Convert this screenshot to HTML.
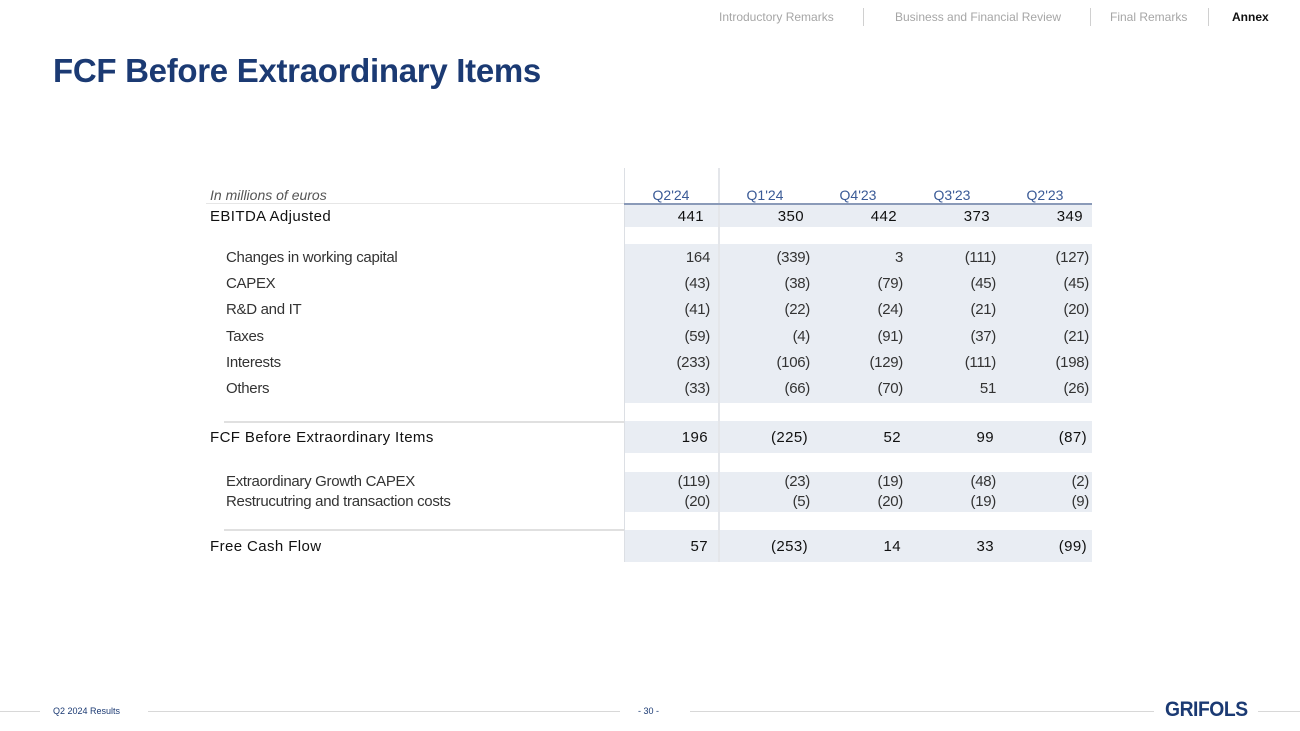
<!DOCTYPE html><html><head><style>
body{margin:0;width:1300px;height:731px;position:relative;background:#fff;font-family:"Liberation Sans",sans-serif;overflow:hidden}
.a{position:absolute}
.nav{top:10px;font-size:12px;color:#a6a6a6}
.sep{width:1px;height:18px;background:#d0d0d0;top:8px}
.sh{background:#e9edf3}
.t{font-size:15px;color:#333;line-height:18px}
.v{width:90px;text-align:right}
.h{font-size:14px;color:#3a5a96;width:90px;text-align:center;top:187px}
</style></head><body>
<div class="a nav" style="left:719px">Introductory Remarks</div>
<div class="a sep" style="left:863px"></div>
<div class="a nav" style="left:895px">Business and Financial Review</div>
<div class="a sep" style="left:1090px"></div>
<div class="a nav" style="left:1110px">Final Remarks</div>
<div class="a sep" style="left:1208px"></div>
<div class="a nav" style="left:1232px;color:#111;font-weight:bold">Annex</div>
<div class="a" style="left:53px;top:52px;font-size:33px;font-weight:bold;color:#1b3a73;letter-spacing:-0.3px">FCF Before Extraordinary Items</div>

<div class="a sh" style="left:624px;top:204px;width:468px;height:23px"></div>
<div class="a sh" style="left:624px;top:244px;width:468px;height:159px"></div>
<div class="a sh" style="left:624px;top:421px;width:468px;height:32px"></div>
<div class="a sh" style="left:624px;top:472px;width:468px;height:40px"></div>
<div class="a sh" style="left:624px;top:530px;width:468px;height:32px"></div>
<div class="a" style="left:624px;top:168px;width:1px;height:394px;background:#dcdfe4"></div>
<div class="a" style="left:718px;top:168px;width:2px;height:394px;background:#e4e6ea"></div>
<div class="a" style="left:206px;top:203px;width:420px;height:1px;background:#e6e6e6"></div>
<div class="a" style="left:624px;top:203px;width:468px;height:2px;background:#8a9ab8"></div>
<div class="a" style="left:224px;top:421px;width:400px;height:2px;background:#e0e0e0"></div>
<div class="a" style="left:224px;top:529px;width:400px;height:2px;background:#e0e0e0"></div>

<div class="a t" style="left:210px;top:186px;font-style:italic;font-size:14px;color:#555">In millions of euros</div>
<div class="a h" style="left:626px">Q2'24</div><div class="a h" style="left:720px">Q1'24</div><div class="a h" style="left:813px">Q4'23</div><div class="a h" style="left:907px">Q3'23</div><div class="a h" style="left:1000px">Q2'23</div>

<div id="rows"></div>
<script>
var R=[[208,"EBITDA Adjusted",1,["441","350","442","373","349"]],
[249,"Changes in working capital",0,["164","(339)","3","(111)","(127)"]],
[275,"CAPEX",0,["(43)","(38)","(79)","(45)","(45)"]],
[301,"R&D and IT",0,["(41)","(22)","(24)","(21)","(20)"]],
[328,"Taxes",0,["(59)","(4)","(91)","(37)","(21)"]],
[354,"Interests",0,["(233)","(106)","(129)","(111)","(198)"]],
[380,"Others",0,["(33)","(66)","(70)","51","(26)"]],
[429,"FCF Before Extraordinary Items",1,["196","(225)","52","99","(87)"]],
[473,"Extraordinary Growth CAPEX",0,["(119)","(23)","(19)","(48)","(2)"]],
[493,"Restrucutring and transaction costs",0,["(20)","(5)","(20)","(19)","(9)"]],
[538,"Free Cash Flow",1,["57","(253)","14","33","(99)"]]];
var E=[710,810,903,996,1089],s="";
R.forEach(function(r){var st=r[2]?"letter-spacing:0.4px;color:#111":"letter-spacing:-0.3px";
s+='<div class="a t" style="left:'+(r[2]?210:226)+'px;top:'+r[0]+'px;'+st+'">'+r[1].replace("&","&amp;")+'</div>';
r[3].forEach(function(v,i){s+='<div class="a t v" style="left:'+(E[i]-90-(r[2]?(r[0]==208?6:2):0))+'px;top:'+r[0]+'px;'+st+'">'+v+'</div>';});});
document.getElementById("rows").innerHTML=s;
</script>

<div class="a" style="left:0;top:711px;width:40px;height:1px;background:#d8d8d8"></div>
<div class="a" style="left:53px;top:706px;font-size:9px;color:#1b3a73">Q2 2024 Results</div>
<div class="a" style="left:148px;top:711px;width:472px;height:1px;background:#d8d8d8"></div>
<div class="a" style="left:638px;top:706px;font-size:9px;color:#1b3a73">- 30 -</div>
<div class="a" style="left:690px;top:711px;width:464px;height:1px;background:#d8d8d8"></div>
<div class="a" style="left:1165px;top:698px;font-size:21px;font-weight:bold;color:#1b3a73;letter-spacing:-0.5px;transform:scaleX(0.92);transform-origin:left">GRIFOLS</div>
<div class="a" style="left:1258px;top:711px;width:42px;height:1px;background:#d8d8d8"></div>
</body></html>
